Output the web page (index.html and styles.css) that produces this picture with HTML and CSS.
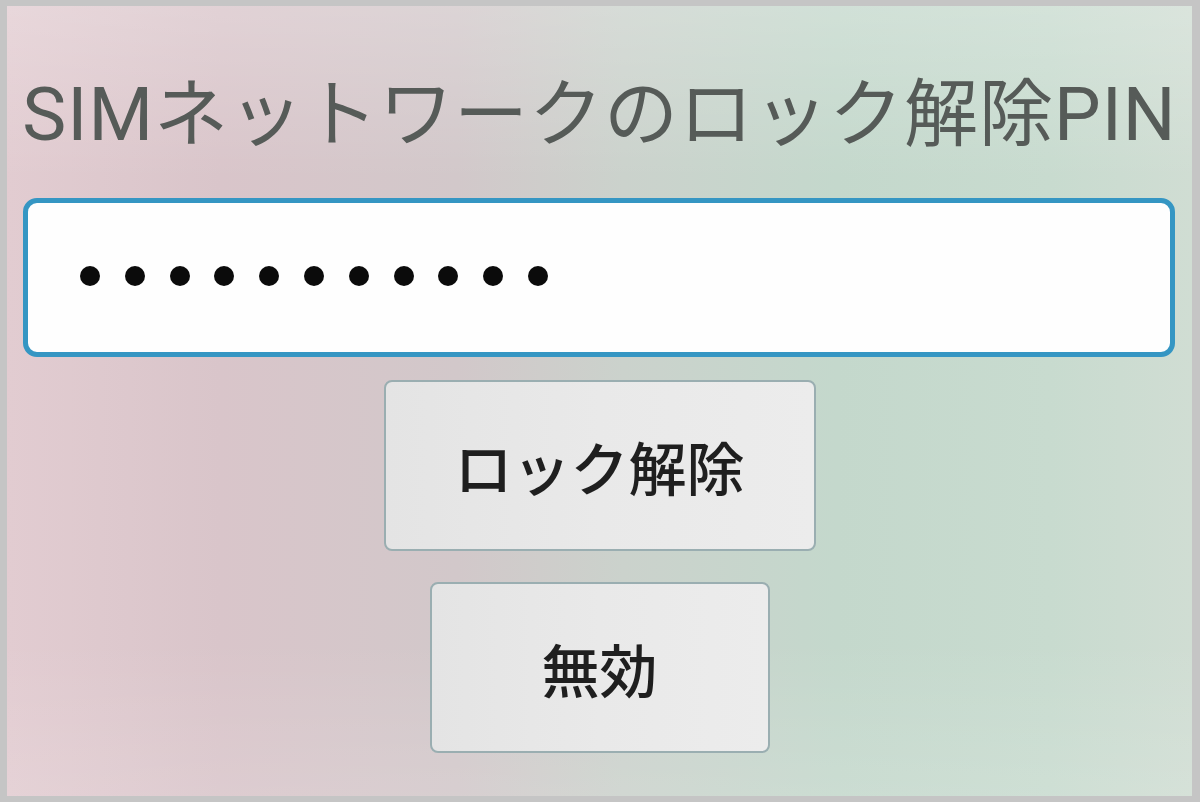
FILE: index.html
```html
<!DOCTYPE html>
<html lang="ja">
<head>
<meta charset="utf-8">
<title>SIMネットワークのロック解除PIN</title>
<link rel="stylesheet" href="styles.css">
</head>
<body>
<div class="frame">
  <main class="screen">
    <h1 class="title">SIMネットワークのロック解除PIN</h1>
    <div class="pin-field" aria-label="PIN">
      <span class="dot"></span><span class="dot"></span><span class="dot"></span><span class="dot"></span><span class="dot"></span><span class="dot"></span><span class="dot"></span><span class="dot"></span><span class="dot"></span><span class="dot"></span><span class="dot"></span>
    </div>
    <button class="btn btn-unlock" type="button">ロック解除</button>
    <button class="btn btn-disable" type="button">無効</button>
  </main>
</div>
</body>
</html>
```

FILE: styles.css
```css
html, body {
  margin: 0;
  padding: 0;
}

body {
  width: 1200px;
  height: 802px;
  overflow: hidden;
  font-family: "Noto Sans CJK JP", "Noto Sans", sans-serif;
}

.frame {
  box-sizing: border-box;
  width: 1200px;
  height: 802px;
  padding: 6px 8px 6px 7px;
  background: #c5c5c5;
}

.screen {
  box-sizing: border-box;
  height: 100%;
  display: flex;
  flex-direction: column;
  align-items: center;
  background:
    linear-gradient(180deg, rgba(255,255,255,0.22) 0%, rgba(255,255,255,0) 22%, rgba(255,255,255,0) 80%, rgba(255,255,255,0.12) 100%),
    linear-gradient(90deg, #e2ccd1 0%, #d9c5ca 18%, #d2c8ca 38%, #cbd2cc 52%, #c4d8cc 70%, #c8dbcf 88%, #d0ddd3 100%);
}

.title {
  margin: 63px 0 0;
  font-family: Roboto, "Noto Sans CJK JP", sans-serif;
  font-size: 74px;
  line-height: 92px;
  font-weight: 400;
  letter-spacing: 1px;
  color: #565b58;
  white-space: nowrap;
}

.pin-field {
  box-sizing: border-box;
  align-self: stretch;
  margin: 37px 17px 0 16px;
  height: 159px;
  border: 5px solid #3596c3;
  border-radius: 14px;
  background: #fefefe;
  display: flex;
  align-items: center;
  gap: 24.8px;
  padding: 0 0 3px 52px;
}

.dot {
  width: 20px;
  height: 20px;
  border-radius: 50%;
  background: #0b0b0b;
  flex: none;
}

.btn {
  box-sizing: border-box;
  height: 171px;
  border: 2.5px solid #9aaeb1;
  border-radius: 8px;
  background: linear-gradient(90deg, #e4e4e4 0%, #e9e9e9 50%, #ececec 100%);
  font-family: "Noto Sans CJK JP", "Noto Sans", sans-serif;
  font-size: 58px;
  font-weight: 500;
  color: #1f1f1f;
  padding: 0;
  margin: 0;
}

.btn-unlock {
  width: 432px;
  margin-top: 23px;
}

.btn-disable {
  width: 340px;
  margin-top: 31px;
}
```
